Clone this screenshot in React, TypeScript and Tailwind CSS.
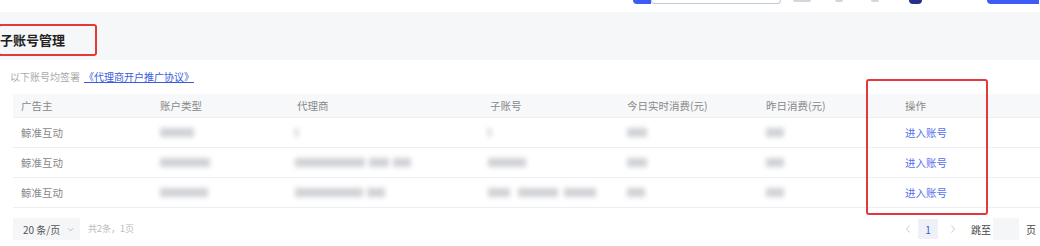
import React from "react";

type Blur = { w: number; ml?: number };

const cols = [
  { label: "广告主", w: "w-[139px]" },
  { label: "账户类型", w: "w-[137px]" },
  { label: "代理商", w: "w-[193px]" },
  { label: "子账号", w: "w-[137px]" },
  { label: "今日实时消费(元)", w: "w-[139px]" },
  { label: "昨日消费(元)", w: "w-[139px]" },
  { label: "操作", w: "flex-1" },
];

// redacted values in the source, drawn as blurred bars
const rows: Blur[][][] = [
  [[{ w: 34 }], [{ w: 3 }], [{ w: 3 }], [{ w: 20 }], [{ w: 18 }]],
  [[{ w: 50 }], [{ w: 70 }, { w: 20, ml: 4 }, { w: 18, ml: 4 }], [{ w: 38 }], [{ w: 20 }], [{ w: 18 }]],
  [[{ w: 48 }], [{ w: 68 }, { w: 18, ml: 4 }], [{ w: 22 }, { w: 40, ml: 8 }, { w: 32, ml: 6 }], [{ w: 18 }], [{ w: 18 }]],
];

function Redacted({ parts }: { parts: Blur[] }) {
  return (
    <div className="flex items-center">
      {parts.map((p, i) => (
        <span
          key={i}
          className="h-[9px] bg-[#c4c7cc] blur-[2.5px] opacity-80"
          style={{ width: p.w, marginLeft: p.ml ?? 0 }}
        />
      ))}
    </div>
  );
}

export default function App() {
  return (
    <div
      className="relative w-[1040px] h-[246px] bg-white overflow-hidden text-[#666]"
      style={{ fontFamily: '"Noto Sans CJK SC", "Noto Sans", sans-serif' }}
    >
      {/* cut-off top bar */}
      <div className="h-[12px] flex items-start">
        <div className="ml-[633px] w-[18px] h-[4px] bg-[#3d5cf5] rounded-bl-sm" />
        <div className="w-[130px] h-[4px] border border-t-0 border-[#c3cad8] rounded-b-sm" />
        <div className="ml-[12px] w-[18px] h-[2px] bg-[#d3d6dc] rounded-b" />
        <div className="ml-[24px] w-[8px] h-[2px] bg-[#d3d6dc] rounded-b" />
        <div className="ml-[28px] w-[8px] h-[2px] bg-[#d3d6dc] rounded-b" />
        <div className="ml-[30px] w-[13px] h-[4px] bg-[#25308a] rounded-b-full" />
        <div className="ml-[65px] w-[52px] h-[4px] bg-[#3d5cf5] rounded-bl-sm" />
      </div>

      {/* header band */}
      <div className="h-[48px] bg-[#f6f7f9] pt-[12px]">
        <div className="-ml-[2px] w-[99px] h-[32px] border-2 border-[#e4393c] rounded-[3px] flex items-center">
          <span className="text-[13px] leading-[16px] font-bold text-[#222]">子账号管理</span>
        </div>
      </div>

      <div className="pl-[10px] pt-[10px] text-[10px] leading-[14px]">
        <span className="text-[#aaa]">以下账号均签署</span>
        <span className="ml-[4px] text-[#3b5bdb] underline">《代理商开户推广协议》</span>
      </div>

      {/* table */}
      <div className="ml-[13px] mt-[10px] text-[10.5px]">
        <div className="flex h-[24px] items-center bg-[#f7f8fa] border-b border-[#eceef1]">
          {cols.map((c) => (
            <div key={c.label} className={`${c.w} pl-[8px] text-[#888]`}>
              {c.label}
            </div>
          ))}
        </div>
        {rows.map((r, i) => (
          <div key={i} className="flex h-[30px] items-center border-b border-[#eceef1]">
            <div className="w-[139px] pl-[8px] text-[#888]">鲸准互动</div>
            <div className="w-[137px] pl-[8px]"><Redacted parts={r[0]} /></div>
            <div className="w-[193px] pl-[6px]"><Redacted parts={r[1]} /></div>
            <div className="w-[137px] pl-[6px]"><Redacted parts={r[2]} /></div>
            <div className="w-[139px] pl-[8px]"><Redacted parts={r[3]} /></div>
            <div className="w-[139px] pl-[8px]"><Redacted parts={r[4]} /></div>
            <div className="flex-1 pl-[8px] text-[#5470f0]">进入账号</div>
          </div>
        ))}
      </div>

      {/* pagination */}
      <div className="ml-[13px] mt-[10px] flex items-center text-[10px]">
        <div className="w-[67px] h-[22px] bg-[#f5f6f8] flex items-center pl-[10px] text-[#555]">
          20 条/页
          <svg className="ml-[7px]" width="7" height="7" viewBox="0 0 8 8">
            <path d="M1 2.5 L4 5.5 L7 2.5" fill="none" stroke="#b4b8c4" strokeWidth="1" />
          </svg>
        </div>
        <span className="ml-[8px] text-[#bbb] text-[9px]">共2条，1页</span>

        <div className="ml-[770px] flex items-center">
          <svg width="8" height="10" viewBox="0 0 8 10">
            <path d="M5.5 1.5 L2.5 5 L5.5 8.5" fill="none" stroke="#ccc" strokeWidth="1" />
          </svg>
          <div className="ml-[6px] w-[20px] h-[20px] bg-[#eef1f8] text-[#3b5bdb] flex items-center justify-center">1</div>
          <svg className="ml-[11px]" width="8" height="10" viewBox="0 0 8 10">
            <path d="M2.5 1.5 L5.5 5 L2.5 8.5" fill="none" stroke="#ccc" strokeWidth="1" />
          </svg>
          <span className="ml-[14px] text-[#444]">跳至</span>
          <div className="ml-[2px] w-[26px] h-[22px] bg-[#f5f6f8]" />
          <span className="ml-[7px] text-[#444]">页</span>
        </div>
      </div>

      {/* highlight around the action column */}
      <div className="absolute left-[866px] top-[79px] w-[122px] h-[136px] border-2 border-[#e4393c] rounded-[3px]" />
    </div>
  );
}
